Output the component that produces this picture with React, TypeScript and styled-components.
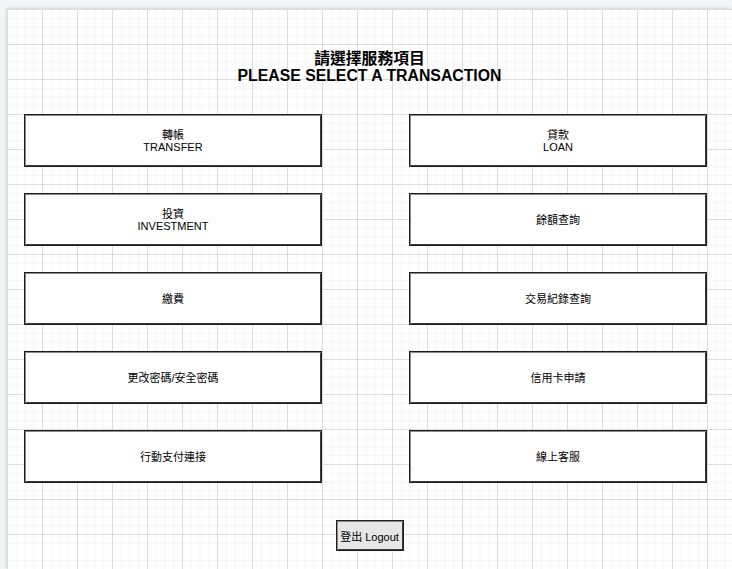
import React from "react";
import styled, { createGlobalStyle } from "styled-components";

const GlobalStyle = createGlobalStyle`
  html, body {
    margin: 0;
    padding: 0;
    background: #f4f5f6;
    overflow: hidden;
  }
  body {
    font-family: "Liberation Sans", Arial, "Noto Sans CJK TC", sans-serif;
  }
`;

const Canvas = styled.div`
  margin: 9px 0 0 7px;
  height: 560px;
  background-color: #ffffff;
  box-shadow: -1px -1px 3px rgba(0, 0, 0, 0.12);
  background-image:
    linear-gradient(to right, #dcdcdc 0 1px, transparent 1px),
    linear-gradient(to bottom, #dcdcdc 0 1px, transparent 1px),
    linear-gradient(to right, #f5f5f5 0 1px, transparent 1px),
    linear-gradient(to bottom, #f5f5f5 0 1px, transparent 1px);
  background-size: 35px 35px, 35px 35px, 8.75px 8.75px, 8.75px 8.75px;
  display: flex;
  flex-direction: column;
  align-items: stretch;
`;

const Title = styled.h1`
  margin: 41px 0 0;
  text-align: center;
  font-family: "Liberation Sans", Arial, "Noto Sans CJK TC", sans-serif;
  font-weight: bold;
  font-size: 15.8px;
  line-height: 17px;
  color: #000;
`;

const Grid = styled.div`
  margin: 30px 0 0 17px;
  display: grid;
  grid-template-columns: 298px 298px;
  column-gap: 87px;
  row-gap: 26px;
`;

const OptionButton = styled.button`
  box-sizing: border-box;
  height: 53px;
  background: #ffffff;
  border: 1px solid #1e1e1e;
  box-shadow: inset 1px 1px 0 #8a8a8a, inset -1px -1px 0 #3a3a3a;
  padding: 0;
  margin: 0;
  display: flex;
  flex-direction: column;
  align-items: center;
  justify-content: center;
  font-family: "Liberation Sans", Arial, "Noto Sans CJK TC", sans-serif;
  font-size: 11px;
  line-height: 12px;
  color: #000;
  cursor: pointer;
`;

const Footer = styled.div`
  margin-top: 37px;
  display: flex;
  justify-content: center;
`;

const LogoutButton = styled.button`
  box-sizing: border-box;
  width: 68px;
  height: 31px;
  background: #e6e6e6;
  border: 1px solid #1e1e1e;
  box-shadow: inset 1px 1px 0 #8a8a8a, inset -1px -1px 0 #3a3a3a;
  font-family: "Liberation Sans", Arial, "Noto Sans CJK TC", sans-serif;
  font-size: 11px;
  color: #000;
  padding: 0;
  cursor: pointer;
`;

const options: { zh: string; en?: string }[] = [
  { zh: "轉帳", en: "TRANSFER" },
  { zh: "貸款", en: "LOAN" },
  { zh: "投資", en: "INVESTMENT" },
  { zh: "餘額查詢" },
  { zh: "繳費" },
  { zh: "交易紀錄查詢" },
  { zh: "更改密碼/安全密碼" },
  { zh: "信用卡申請" },
  { zh: "行動支付連接" },
  { zh: "線上客服" },
];

export default function App() {
  return (
    <>
      <GlobalStyle />
      <Canvas>
        <Title>
          請選擇服務項目
          <br />
          PLEASE SELECT A TRANSACTION
        </Title>
        <Grid>
          {options.map((o) => (
            <OptionButton key={o.zh}>
              <span>{o.zh}</span>
              {o.en && <span>{o.en}</span>}
            </OptionButton>
          ))}
        </Grid>
        <Footer>
          <LogoutButton>登出 Logout</LogoutButton>
        </Footer>
      </Canvas>
    </>
  );
}
